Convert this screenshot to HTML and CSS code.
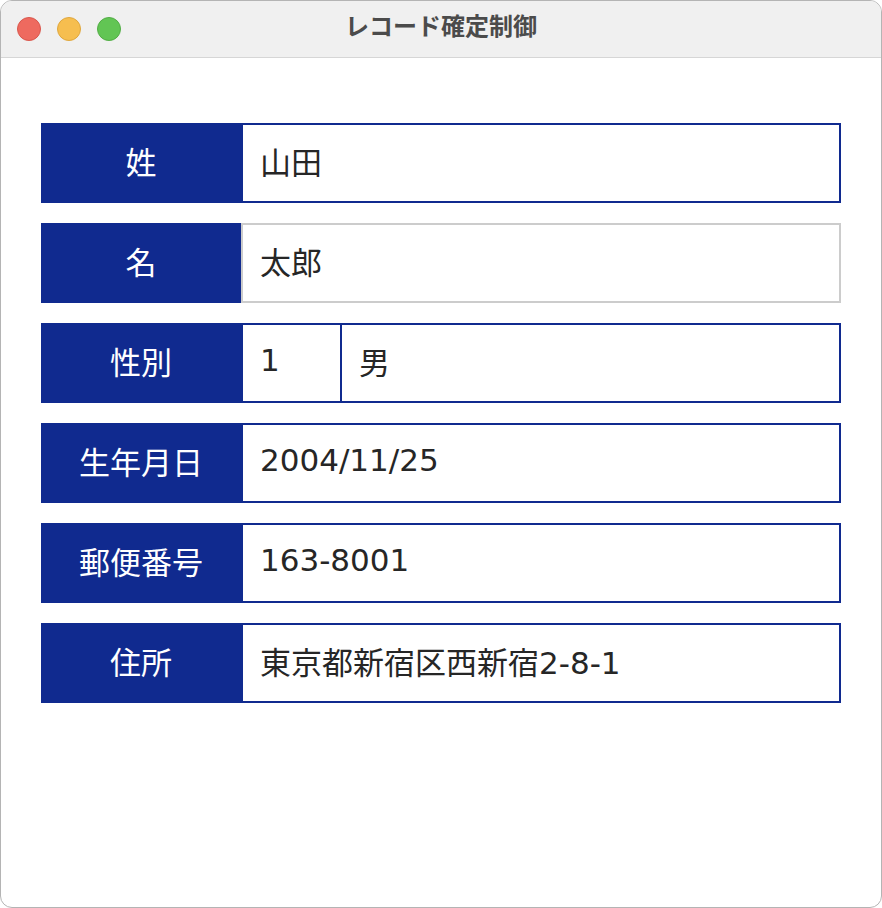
FILE: index.html
```html
<!DOCTYPE html>
<html lang="ja">
<head>
<meta charset="utf-8">
<title>レコード確定制御</title>
<link rel="stylesheet" href="styles.css">
</head>
<body>
<div class="window">
  <div class="titlebar">
    <div class="lights">
      <span class="light red"></span>
      <span class="light yellow"></span>
      <span class="light green"></span>
    </div>
    <div class="title">レコード確定制御</div>
    <div class="spacer"></div>
  </div>
  <div class="content">
    <div class="row">
      <div class="label">姓</div>
      <div class="value">山田</div>
    </div>
    <div class="row">
      <div class="label">名</div>
      <div class="value inactive">太郎</div>
    </div>
    <div class="row">
      <div class="label">性別</div>
      <div class="value split">
        <div class="cell code">1</div>
        <div class="cell">男</div>
      </div>
    </div>
    <div class="row">
      <div class="label">生年月日</div>
      <div class="value">2004/11/25</div>
    </div>
    <div class="row">
      <div class="label">郵便番号</div>
      <div class="value">163-8001</div>
    </div>
    <div class="row">
      <div class="label">住所</div>
      <div class="value">東京都新宿区西新宿2-8-1</div>
    </div>
  </div>
</div>
</body>
</html>
```

FILE: styles.css
```css
html, body {
  margin: 0;
  padding: 0;
  background: #ffffff;
}

body {
  font-family: "Noto Sans CJK JP", "Noto Sans", sans-serif;
}

.window {
  box-sizing: border-box;
  width: 882px;
  height: 908px;
  border: 1px solid #b4b4b4;
  border-radius: 12px;
  overflow: hidden;
  background: #ffffff;
  display: flex;
  flex-direction: column;
}

.titlebar {
  height: 56px;
  flex: none;
  background: #f0f0f0;
  border-bottom: 1px solid #d6d6d6;
  display: grid;
  grid-template-columns: 1fr auto 1fr;
  align-items: center;
}

.lights {
  display: flex;
  gap: 16px;
  padding-left: 16px;
}

.light {
  box-sizing: border-box;
  width: 24px;
  height: 24px;
  border-radius: 50%;
}

.red { background: #ee6a5f; border: 1px solid #d9574d; }
.yellow { background: #f6be4f; border: 1px solid #dfa73e; }
.green { background: #62c554; border: 1px solid #52ad45; }

.title {
  font-size: 24px;
  line-height: 30px;
  font-weight: 700;
  color: #4b4b4b;
  padding-bottom: 8px;
}

.content {
  padding: 65px 40px 0 40px;
  display: flex;
  flex-direction: column;
  gap: 20px;
}

.row {
  display: flex;
  height: 80px;
}

.label {
  flex: none;
  box-sizing: border-box;
  width: 200px;
  padding-bottom: 6px;
  background: #102a8f;
  color: #ffffff;
  font-size: 31px;
  display: flex;
  align-items: center;
  justify-content: center;
}

.value {
  flex: 1;
  box-sizing: border-box;
  border: 2px solid #102a8f;
  padding-left: 17px;
  padding-bottom: 6px;
  display: flex;
  align-items: center;
  font-family: "DejaVu Sans", "Noto Sans CJK JP", sans-serif;
  font-size: 31px;
  color: #262626;
}

.value.inactive {
  border-color: #cccccc;
}

.value.split {
  padding-left: 0;
  padding-bottom: 0;
}

.cell {
  box-sizing: border-box;
  height: 100%;
  display: flex;
  align-items: center;
  padding-left: 17px;
  padding-bottom: 6px;
}

.cell.code {
  width: 99px;
  border-right: 2px solid #102a8f;
}
```
